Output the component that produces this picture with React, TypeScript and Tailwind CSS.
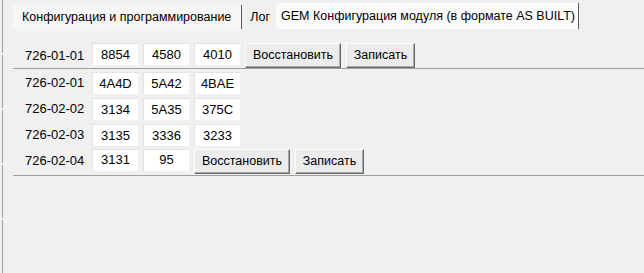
const rows = [
  { label: "726-02-01", values: ["4A4D", "5A42", "4BAE"], buttons: false },
  { label: "726-02-02", values: ["3134", "5A35", "375C"], buttons: false },
  { label: "726-02-03", values: ["3135", "3336", "3233"], buttons: false },
  { label: "726-02-04", values: ["3131", "95"], buttons: true },
];

const Field = ({ value }: { value: string }) => (
  <div className="flex h-[22px] w-[46px] items-center justify-center border-l border-t border-[#e3e3e3] bg-white">
    {value}
  </div>
);

const Btn = ({ children, w }: { children: string; w: string }) => (
  <button
    className={`flex h-[25px] ${w} items-center justify-center border border-t-[#fdfdfd] border-l-[#fdfdfd] border-r-[#6a6a6a] border-b-[#6a6a6a] bg-[#ececec] text-[12.5px] shadow-[inset_-1px_-1px_0_#a8a8a8]`}
  >
    {children}
  </button>
);

const Row = ({
  label,
  values,
  buttons,
}: {
  label: string;
  values: string[];
  buttons: boolean;
}) => (
  <div className="flex h-[26px] items-center">
    <div className="w-[79px] pl-[12px]">{label}</div>
    <div className="flex gap-[5px]">
      {values.map((v) => (
        <Field key={v} value={v} />
      ))}
      {buttons && (
        <>
          <Btn w="w-[96px]">Восстановить</Btn>
          <Btn w="w-[69px]">Записать</Btn>
        </>
      )}
    </div>
  </div>
);

export default function App() {
  return (
    <div className="relative flex h-[273px] w-[644px] overflow-hidden bg-[#f0f0f0] font-['Liberation_Sans',Arial,sans-serif] text-[13px] text-black">
      {/* left splitter */}
      <div className="flex w-[3px] flex-col gap-[2px]">
        {[0, 1, 2, 3, 4].map((i) => (
          <div key={i} className="h-[58px] border-r border-[#a0a0a0]" />
        ))}
      </div>

      <div className="flex flex-1 flex-col pl-[10px]">
        {/* tabs */}
        <div className="mt-[5px] flex h-[24px] items-stretch text-[12.5px]">
          <div className="flex items-center border-r border-[#5a5a5a] bg-[#f6f6f6] pl-[9px] pr-[10px]">
            Конфигурация и программирование
          </div>
          <div className="flex items-center pl-[8px] pr-[6px]">Лог</div>
          <div className="-mt-[2px] flex items-center border-r border-[#5a5a5a] bg-[#fbfbfb] pl-[5px] pr-[3px]">
            GEM Конфигурация модуля (в формате AS BUILT)
          </div>
        </div>

        {/* first block */}
        <div className="mt-[14px] flex h-[26px] items-center border-b border-[#a0a0a0]">
          <div className="w-[79px] pl-[12px]">726-01-01</div>
          <div className="flex gap-[5px]">
            <Field value="8854" />
            <Field value="4580" />
            <Field value="4010" />
            <Btn w="w-[96px]">Восстановить</Btn>
            <Btn w="w-[69px]">Записать</Btn>
          </div>
        </div>

        {/* second block */}
        <div className="border-b border-[#a0a0a0] py-[1px]">
          {rows.map((r) => (
            <Row key={r.label} {...r} />
          ))}
        </div>
      </div>
    </div>
  );
}
